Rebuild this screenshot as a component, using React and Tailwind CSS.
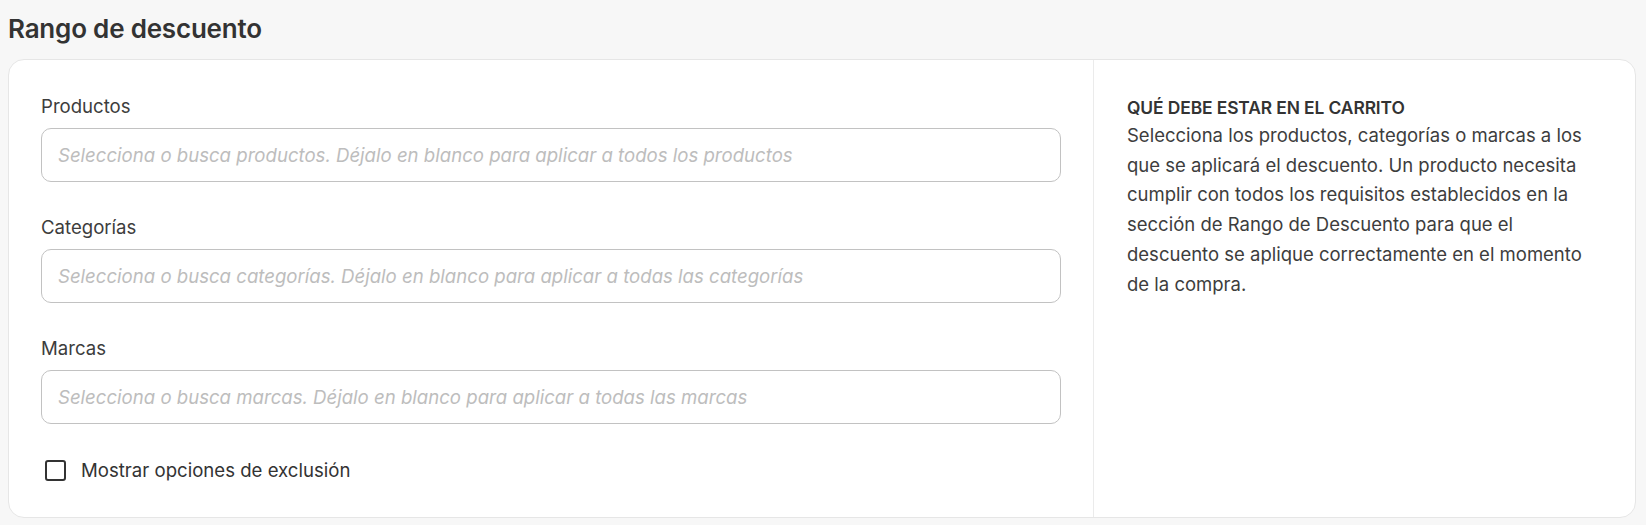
import React from 'react';

const fields = [
    {
        label: 'Productos',
        placeholder: 'Selecciona o busca productos. Déjalo en blanco para aplicar a todos los productos',
    },
    {
        label: 'Categorías',
        placeholder: 'Selecciona o busca categorías. Déjalo en blanco para aplicar a todas las categorías',
    },
    {
        label: 'Marcas',
        placeholder: 'Selecciona o busca marcas. Déjalo en blanco para aplicar a todas las marcas',
    },
];

const App = () => {
    return (
        <div className="min-h-[525px] bg-[#f7f7f7] pt-[9px] pl-2 pr-[10px] font-['Inter',sans-serif] text-[#3a3a3a]">
            <h2 className="text-[26px] leading-[40px] font-semibold tracking-[-0.2px] text-[#333]">
                Rango de descuento
            </h2>

            <div className="mt-[10px] flex rounded-2xl border border-[#e6e6e6] bg-white">
                {/* left column: selectors */}
                <div className="flex-1 border-r border-[#ebebeb] px-[32px] pt-[34px] pb-[34px]">
                    {fields.map(field => (
                        <div key={field.label} className="mb-[33px]">
                            <label className="block text-[18.6px] leading-[25px] text-[#3d3d3d]">
                                {field.label}
                            </label>
                            <input
                                type="text"
                                placeholder={field.placeholder}
                                className="mt-[9px] h-[54px] w-full rounded-[10px] border border-[#c2c2c2] bg-white px-4 text-[18.6px] italic outline-none placeholder:text-[#bdbdbd]"
                            />
                        </div>
                    ))}

                    <label className="flex items-center gap-[15px] text-[18.6px] leading-[26px] text-[#333]">
                        <input
                            type="checkbox"
                            className="ml-[4px] h-[21px] w-[21px] appearance-none rounded-[3px] border-2 border-[#333] bg-white"
                        />
                        Mostrar opciones de exclusión
                    </label>
                </div>

                {/* right column: help text */}
                <div className="w-[541px] shrink-0 px-[33px] pt-[34px]">
                    <h3 className="text-[17.4px] leading-[27px] font-semibold tracking-[-0.1px] text-[#333]">
                        QUÉ DEBE ESTAR EN EL CARRITO
                    </h3>
                    <p className="text-[18.5px] leading-[29.7px] text-[#3d3d3d]">
                        Selecciona los productos, categorías o marcas a los que se aplicará el descuento. Un producto necesita cumplir con todos los requisitos establecidos en la sección de Rango de Descuento para que el descuento se aplique correctamente en el momento de la compra.
                    </p>
                </div>
            </div>
        </div>
    );
};

export default App;
